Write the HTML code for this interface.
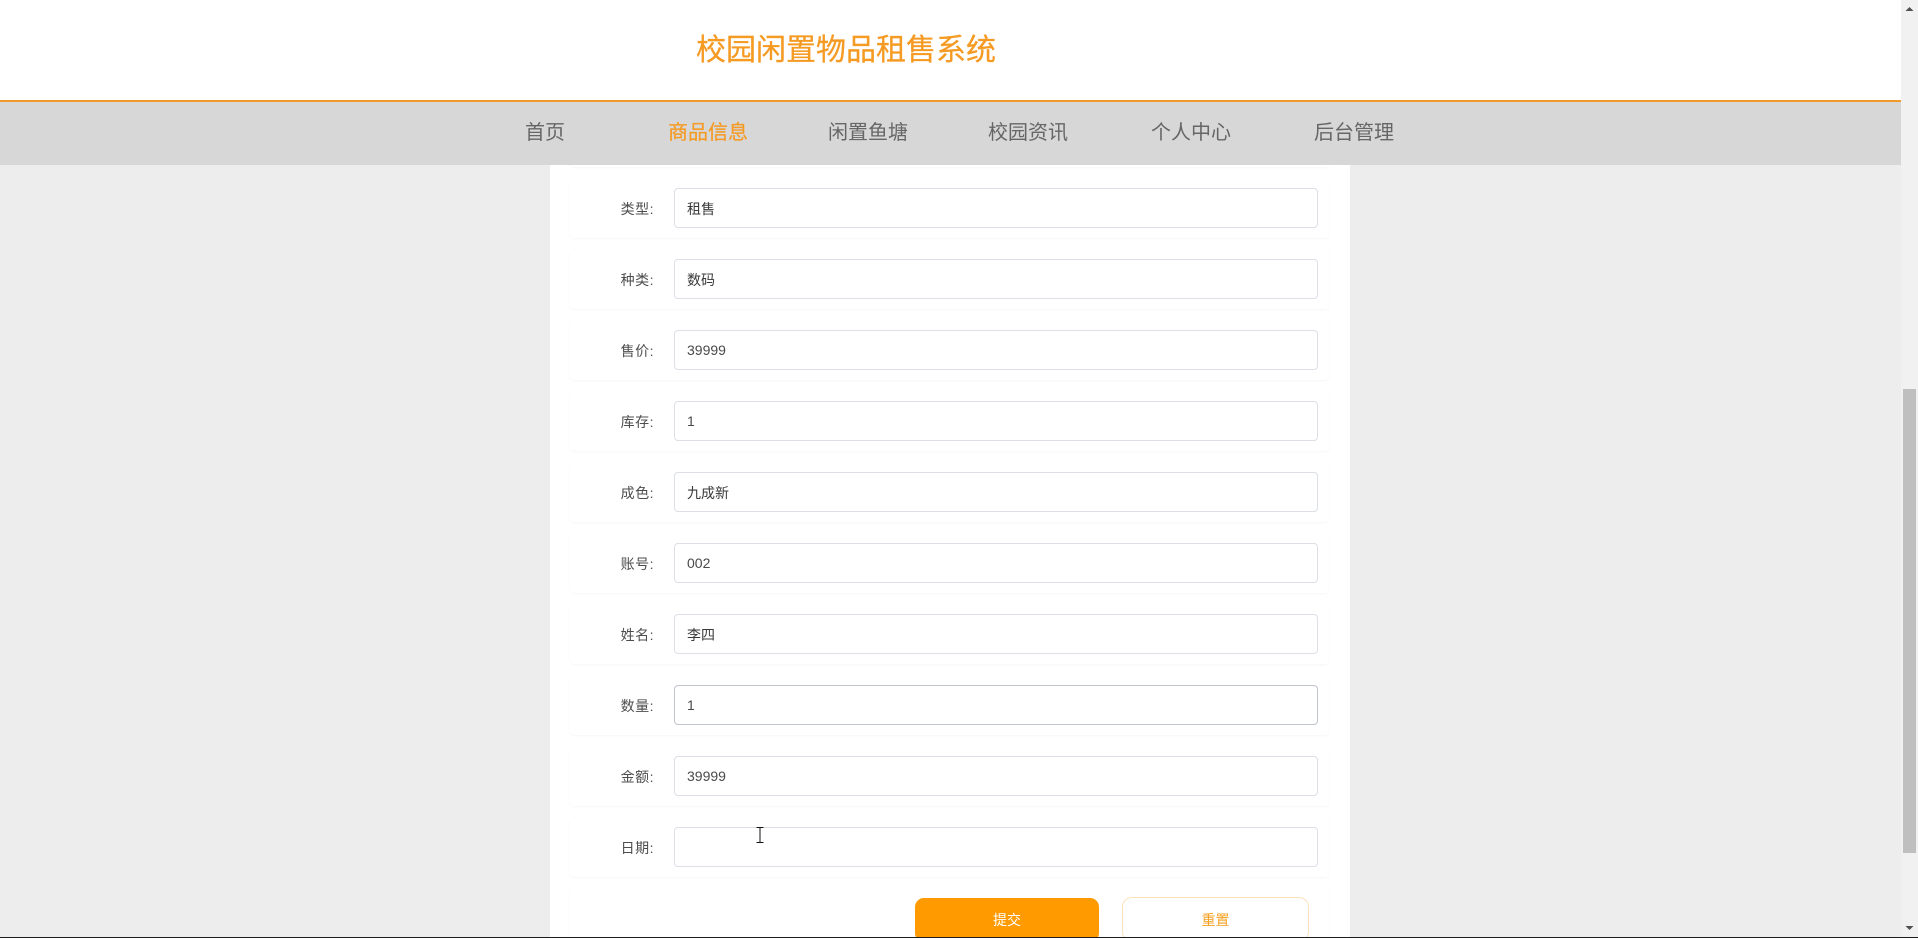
<!DOCTYPE html>
<html lang="zh-CN">
<head>
<meta charset="utf-8">
<title>校园闲置物品租售系统</title>
<style>
*{box-sizing:border-box;margin:0;padding:0}
html,body{width:1918px;height:938px;overflow:hidden;background:#ededed;font-family:"Liberation Sans","Noto Sans CJK SC",sans-serif}
#page{position:relative;width:1918px;height:938px;overflow:hidden;background:#ededed}
.abs,.nav a,.row,.label,.input,.btn{position:absolute}
#panel{position:absolute;left:550px;top:102px;width:800px;height:836px;background:#fff}
#header{position:absolute;left:0;top:0;width:1901px;height:102px;background:#fff;border-bottom:2px solid #f09a2e}
#title{position:absolute;left:696px;top:31px;font-size:30px;line-height:40px;color:#f59a23;white-space:nowrap;-webkit-text-stroke:.25px #f59a23}
#nav{position:absolute;left:0;top:102px;width:1901px;height:63px;background:#d7d7d7}
.nav a{top:1px;font-size:20px;line-height:60px;color:#666;white-space:nowrap;text-decoration:none}
.nav a.on{color:#f59a23;-webkit-text-stroke:.2px #f59a23}
.row{left:570px;width:759px;height:60px;background:#fff;border-radius:4px;box-shadow:0 1px 2px rgba(0,0,0,.03),0 0 2px rgba(0,0,0,.015)}
.label{left:0;top:0;width:84px;text-align:right;font-size:14px;line-height:62px;letter-spacing:.5px;color:#4d4d4d;white-space:nowrap}
.input{left:104px;top:10px;width:644px;height:40px;border:1px solid #dcdfe6;border-radius:4px;background:#fff;padding-left:12px;font-size:14px;line-height:38px;color:#4a4a4a;white-space:nowrap}
.input.c{line-height:40px;color:#3a3a3a}
.input.h{border-color:#c0c4cc}
.btn{top:898px;height:44px;border-radius:9px;font-size:14px;line-height:44px;text-align:center;white-space:nowrap}
#sub{left:915px;width:184px;background:#ff9a00;color:#fff}
#res{left:1122px;top:897px;width:187px;height:45px;background:#fff;border:1.5px solid #fbe2bd;border-radius:10px;color:#f5a020}
#sb{position:absolute;left:1901px;top:0;width:17px;height:938px;background:#f1f1f1}
#thumb{position:absolute;left:2px;top:389px;width:13px;height:464px;background:#bfbfbf}
#bar{position:absolute;left:0;top:937px;width:1918px;height:1px;background:#1c1c1c}
</style>
</head>
<body>
<div id="page">
<div id="panel"></div>

<div class="row" style="top:107px"></div>
<div class="row" style="top:178px"><div class="label">类型:</div><div class="input c">租售</div></div>
<div class="row" style="top:249px"><div class="label">种类:</div><div class="input c">数码</div></div>
<div class="row" style="top:320px"><div class="label">售价:</div><div class="input">39999</div></div>
<div class="row" style="top:391px"><div class="label">库存:</div><div class="input">1</div></div>
<div class="row" style="top:462px"><div class="label">成色:</div><div class="input c">九成新</div></div>
<div class="row" style="top:533px"><div class="label">账号:</div><div class="input">002</div></div>
<div class="row" style="top:604px"><div class="label">姓名:</div><div class="input c">李四</div></div>
<div class="row" style="top:675px"><div class="label">数量:</div><div class="input h">1</div></div>
<div class="row" style="top:746px"><div class="label">金额:</div><div class="input">39999</div></div>
<div class="row" style="top:817px"><div class="label">日期:</div><div class="input"></div></div>
<div class="row" style="top:888px;height:60px"></div>

<div class="btn" id="sub">提交</div>
<div class="btn" id="res">重置</div>

<div id="header"><div id="title">校园闲置物品租售系统</div></div>
<div id="nav" class="nav">
<a style="left:525px">首页</a>
<a class="on" style="left:668px">商品信息</a>
<a style="left:828px">闲置鱼塘</a>
<a style="left:988px">校园资讯</a>
<a style="left:1151px">个人中心</a>
<a style="left:1314px">后台管理</a>
</div>

<svg class="abs" style="left:755px;top:826px" width="10" height="18" viewBox="0 0 10 18"><path d="M1.5 1.5H8.5M1.5 16.5H8.5M5 1.5V16.5" stroke="#111" stroke-width="1" fill="none"/></svg>

<div id="sb">
<svg class="abs" style="left:0;top:0" width="17" height="17" viewBox="0 0 17 17"><path d="M4.5 11H12.5L8.5 7Z" fill="#505050"/></svg>
<div id="thumb"></div>
<svg class="abs" style="left:0;top:920px" width="17" height="17" viewBox="0 0 17 17"><path d="M4.5 6H12.5L8.5 10Z" fill="#505050"/></svg>
</div>
<div id="bar"></div>
</div>
</body>
</html>
